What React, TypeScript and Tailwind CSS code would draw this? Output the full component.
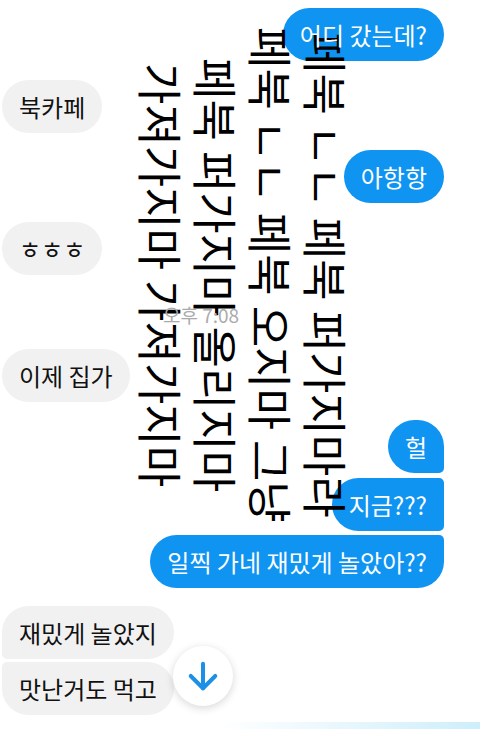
import React from "react";
import { ArrowDown } from "lucide-react";

type Side = "left" | "right";

function Bubble({
  side,
  text,
  radius,
  mt,
}: {
  side: Side;
  text: string;
  radius: string;
  mt: string;
}) {
  const row =
    side === "right" ? "flex justify-end pr-[36px]" : "flex justify-start pl-[2px]";
  const color =
    side === "right" ? "bg-[#0f94f2] text-white" : "bg-[#f1f1f1] text-[#111111]";
  return (
    <div className={`${row} ${mt}`}>
      <div className={`flex h-[53px] items-center px-[17px] ${color} ${radius}`}>
        <span className="relative z-20 text-[24px] leading-[30px] whitespace-pre">{text}</span>
      </div>
    </div>
  );
}

export default function App() {
  return (
    <div className="relative h-[729px] w-[480px] overflow-hidden bg-white font-['Noto_Sans_CJK_KR','Noto_Sans',sans-serif]">
      <div className="flex flex-col pt-[8px]">
        <Bubble side="right" text="어디 갔는데?" radius="rounded-[27px]" mt="mt-0" />
        <Bubble side="left" text="북카페" radius="rounded-[27px]" mt="mt-[19px]" />
        <Bubble side="right" text="아항항" radius="rounded-[27px]" mt="mt-[17px]" />
        <Bubble side="left" text="ㅎㅎㅎ" radius="rounded-[27px]" mt="mt-[19px]" />
        <div className="mt-[27px] flex pl-[163px]">
          <span className="relative z-20 text-[19px] leading-[26px] text-[#ababab]">오후 7:08</span>
        </div>
        <Bubble side="left" text="이제 집가" radius="rounded-[27px]" mt="mt-[21px]" />
        <Bubble
          side="right"
          text="헐"
          radius="rounded-tl-[27px] rounded-tr-[27px] rounded-bl-[27px] rounded-br-[5px]"
          mt="mt-[18px]"
        />
        <Bubble
          side="right"
          text="지금???"
          radius="rounded-tl-[27px] rounded-bl-[27px] rounded-tr-[5px] rounded-br-[5px]"
          mt="mt-[5px]"
        />
        <Bubble
          side="right"
          text="일찍 가네 재밌게 놀았아??"
          radius="rounded-tl-[27px] rounded-bl-[27px] rounded-br-[27px] rounded-tr-[5px]"
          mt="mt-[4px]"
        />
        <Bubble
          side="left"
          text="재밌게 놀았지"
          radius="rounded-tl-[27px] rounded-tr-[27px] rounded-br-[27px] rounded-bl-[5px]"
          mt="mt-[18px]"
        />
        <Bubble
          side="left"
          text="맛난거도 먹고"
          radius="rounded-tr-[27px] rounded-br-[27px] rounded-bl-[27px] rounded-tl-[5px]"
          mt="mt-[3px]"
        />
      </div>

      {/* overlaid rotated text */}
      <div className="absolute left-[134px] top-[0px] z-10 h-[550px] w-[220px] text-center text-[45px] leading-[55px] text-black [text-orientation:sideways] [writing-mode:vertical-rl]">
        <div>페북 ㄴㄴ 페북 퍼가지마라</div>
        <div>페북 ㄴㄴ 페북 오지마 그냥</div>
        <div>페북 퍼가지마 올리지마</div>
        <div>가져가지마 가져가지마</div>
      </div>

      {/* scroll down button */}
      <div className="absolute left-[173px] top-[646px] z-30 flex h-[60px] w-[60px] items-center justify-center rounded-full bg-white shadow-[0_2px_8px_rgba(0,0,0,0.16)]">
        <ArrowDown size={42} strokeWidth={2.3} color="#1c90e6" />
      </div>

      {/* bottom strip */}
      <div className="absolute bottom-0 right-0 h-[7px] w-[260px] bg-gradient-to-r from-white to-[#cdeefb]" />
    </div>
  );
}
